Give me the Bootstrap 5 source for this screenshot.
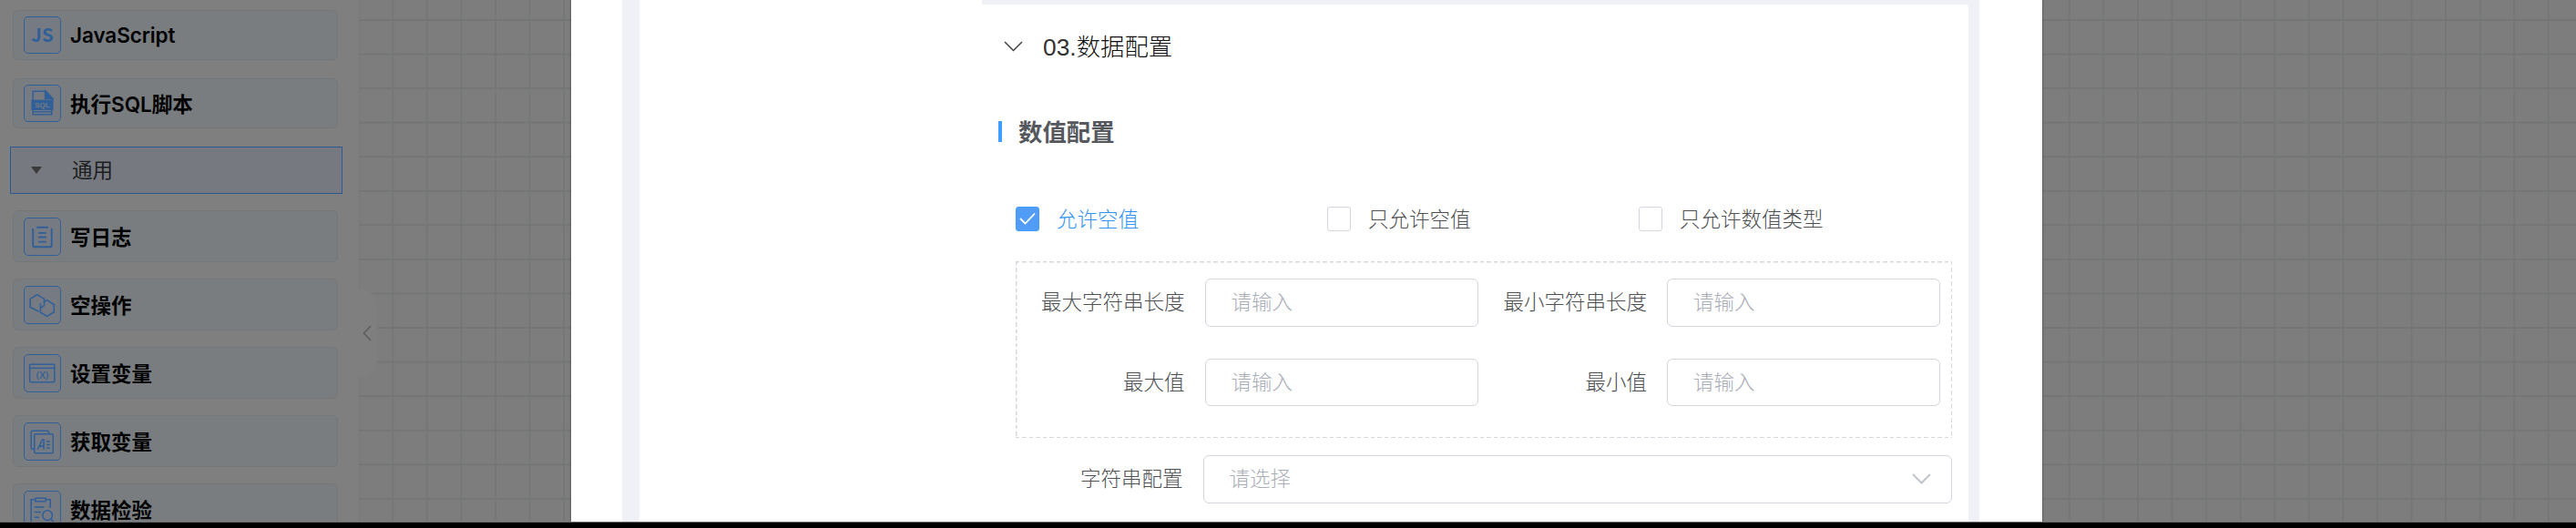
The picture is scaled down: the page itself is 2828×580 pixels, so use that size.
<!DOCTYPE html>
<html lang="zh-CN">
<head>
  <meta charset="UTF-8">
  <title>数据检验</title>
  <meta name="viewport" content="width=device-width, initial-scale=1.0">
  <link href="https://cdn.jsdelivr.net/npm/bootstrap@5.3.0/dist/css/bootstrap.min.css" rel="stylesheet">
  <style>
    body { font-family: "Liberation Sans", "Noto Sans CJK SC", sans-serif; font-size: 22.5px; line-height: 30px; background: #000; }
    .workspace { height: 574px; background: #7f7f7f; }
    .workspace::after { content: ""; position: absolute; left: 0; right: 0; bottom: 0; height: 1px; background: #6b6b6b; }

    /* 左侧组件栏 */
    .sidebar { width: 394px; padding: 11px 0 0 11px; }
    .node-item { width: 357px; height: 55px; margin: 0 0 20px 3px; padding-left: 11px; gap: 10px; background: #797d80; border: 1px solid #74777a; border-radius: 6px; color: #000; font-family: Inter, "Noto Sans CJK SC", sans-serif; font-weight: 600; }
    .node-tall { height: 57px; margin-bottom: 18px; }
    .node-item > span, .group-title > .group-name { padding-top: 2px; }
    .node-item > .latin-name { padding-top: 0; letter-spacing: -.1px; }
    .node-icon { width: 41px; height: 41px; flex: none; background: #767b83; border: 1px solid #315f98; border-radius: 5px; color: #315f98; }
    .node-tall .node-icon { height: 42px; }
    .node-icon svg { display: block; width: 100%; height: 100%; fill: none; stroke: currentColor; stroke-width: 1.5; }
    .node-icon text { fill: currentColor; stroke: none; font-weight: 700; font-family: "Noto Sans CJK SC", sans-serif; }
    .node-icon .sql-text { fill: #767b83; font-family: "Liberation Sans", sans-serif; }
    .node-icon .var-text { font-family: "Open Sans", sans-serif; font-weight: 600; }
    .group-title { width: 365px; height: 52px; margin: 0 0 18px; padding-left: 22px; gap: 33px; background: #76797f; border: 1px solid #2c5a94; color: #1c1d1f; }
    .caret { border: 6.5px solid transparent; border-top: 8px solid #3a3a3a; border-bottom: 0; }

    /* 画布网格 */
    .canvas { background-color: #7d7d7d; background-image: linear-gradient(#747676 1.5px, transparent 1.5px), linear-gradient(90deg, #757777 1.5px, transparent 1.5px); background-size: 37.57px 37.57px; background-position: 36.3px 21px; }
    .fold-btn { left: 0; top: 318px; width: 20px; height: 96px; background: #7f7f7f; border-radius: 0 18px 18px 0; }

    /* 弹窗 */
    .config-dialog { left: 627px; top: 0; width: 1615px; height: 573px; padding: 0 69px 0 55.5px; background: #fff; box-shadow: 0 0 2px rgba(0, 0, 0, .6); }
    .dialog-body { background: #f0f1f6; padding: 0 12px 0 19.5px; }
    .side-blank { width: 376px; background: #fff; }
    .config-panel { margin-top: 5px; padding: 0 18px 0 18px; background: #fff; border-radius: 0 4px 0 0; color: #4e5054; font-weight: 300; }
    .panel-title { height: 91px; padding-left: 6px; gap: 22px; font-size: 26.4px; color: #111; font-weight: 300; }
    .panel-title > span { padding-top: 2px; }
    .panel-title .no { color: #333; }
    .section-title { height: 97px; gap: 18px; font-size: 26.4px; color: #55585d; font-weight: 700; }
    .section-title::before { content: ""; width: 4px; height: 23px; background: #409eff; }
    .section-title > span { padding-top: 2px; }
    .section-body { padding-left: 19px; }
    .check-row { height: 94px; }
    .check-col { width: 342px; gap: 19px; }
    .check-col > span { padding-top: 3px; }
    .check-col .form-check-input { width: 26px; height: 27px; margin: 0; border: 1px solid #d3d6de; border-radius: 3px; }
    .check-col .form-check-input:checked { background-color: #519cf6; border-color: #409eff; background-size: 24px; background-image: url("data:image/svg+xml,%3csvg xmlns='http://www.w3.org/2000/svg' viewBox='0 0 24 24'%3e%3cpath fill='none' stroke='%23fff' stroke-width='1.8' d='M4 12l5.500 5.500L20 6.500'/%3e%3c/svg%3e"); }
    .check-col.active { color: #2f93fb; }
    /* 虚线框四边 */
    .dash-box {
      --dash: #d6d8e0 0 4.5px, transparent 4.5px 7.5px;
      height: 194px; padding: 19px 12px 0 1px; row-gap: 35px;
      background: repeating-linear-gradient(90deg, var(--dash)) top / 100% 1.5px no-repeat,
        repeating-linear-gradient(90deg, var(--dash)) bottom / 100% 1.5px no-repeat,
        repeating-linear-gradient(var(--dash)) left / 1.5px 100% no-repeat,
        repeating-linear-gradient(var(--dash)) right / 1.5px 100% no-repeat;
    }
    .field-label { text-align: right; padding: 2px 22px 0 0; }
    .form-control.cfg-input { width: 300px; height: 52.5px; padding: 2px 28px 0; border: 1px solid #d3d6de; border-radius: 6px; font-size: 22.5px; font-weight: 300; }
    .cfg-input::placeholder { color: #a9adb7; opacity: 1; }
    .select-row { margin-top: 18.5px; }
    .cfg-select { height: 53px; padding: 0 22px 0 28px; border: 1px solid #d3d6de; border-radius: 6px; color: #a9adb7; }
    .cfg-select > span { padding-top: 2px; }
    .w-a { width: 206.5px; }
    .w-b { width: 207.5px; }
    .select-row .w-a { width: 205.5px; }
  </style>
</head>
<body>
  <div class="workspace d-flex position-relative overflow-hidden">
    <aside class="sidebar flex-shrink-0">
      <div class="node-item d-flex align-items-center">
        <div class="node-icon"><svg viewBox="0 0 38 38"><text x="19" y="26.500" text-anchor="middle" font-size="20">JS</text></svg></div>
        <span class="latin-name">JavaScript</span>
      </div>
      <div class="node-item d-flex align-items-center">
        <div class="node-icon"><svg viewBox="0 0 38 38"><path d="M9 16V6h14l7 8v2M9 25v6h20v-6M10 28h18"/><path d="M22 6v8h8z" fill="currentColor"/><rect x="8" y="16" width="22" height="9.500" fill="currentColor"/><text class="sql-text" x="19" y="23.500" text-anchor="middle" font-size="7.500" textLength="16" lengthAdjust="spacingAndGlyphs">SQL</text></svg></div>
        <span>执行SQL脚本</span>
      </div>
      <div class="group-title d-flex align-items-center"><span class="caret"></span><span class="group-name">通用</span></div>
      <div class="node-item node-tall d-flex align-items-center">
        <div class="node-icon"><svg viewBox="0 0 38 38" stroke-linecap="round"><path d="M9 11v17q0 2 2 2h16q2 0 2-2V11M13.500 9h11M15.500 15h7M15.500 19.500h7M15.500 24.500h7" stroke-width="1.900"/></svg></div>
        <span>写日志</span>
      </div>
      <div class="node-item node-tall d-flex align-items-center">
        <div class="node-icon"><svg viewBox="0 0 38 38"><path d="M15.500 26L6 21.500V12.500L13.500 8l7.500 4.500v7l-3 2.500M17 17v10l7 4 7.500-4.500v-8L24 14l-4 2"/></svg></div>
        <span>空操作</span>
      </div>
      <div class="node-item node-tall d-flex align-items-center">
        <div class="node-icon"><svg viewBox="0 0 38 38"><rect x="5.500" y="9.500" width="26.500" height="19" rx="1"/><path d="M5.500 13.500h26.500"/><text class="var-text" x="19" y="24.500" text-anchor="middle" font-size="10.500">(X)</text></svg></div>
        <span>设置变量</span>
      </div>
      <div class="node-item node-tall d-flex align-items-center">
        <div class="node-icon"><svg viewBox="0 0 38 38"><path d="M10.500 27H9q-2 0-2-2V9q0-1.500 1.500-1.500H24q2 0 2 3"/><rect x="10.500" y="11" width="20" height="20.500" rx="1.500"/><path d="M14 27.500L19 17h1.500v10.500M16 24h4.500M23.500 19h3.500M23.500 22.500h3.500M23.500 26h3.500"/></svg></div>
        <span>获取变量</span>
      </div>
      <div class="node-item node-tall d-flex align-items-center">
        <div class="node-icon"><svg viewBox="0 0 38 38"><path d="M11 8H7v25h11M23 8h4.500v9M11.500 6.500h11v3.500h-11zM10.500 16h10.500M10.500 21.500h7M10.500 27h5"/><circle cx="24.500" cy="25" r="5.200"/><path d="M28 29l4 4"/></svg></div>
        <span>数据检验</span>
      </div>
    </aside>

    <main class="canvas flex-grow-1 position-relative">
      <div class="fold-btn position-absolute d-flex align-items-center">
        <svg class="ms-1" width="10" height="18" viewBox="0 0 10 18" fill="none" stroke="#5b5c5e" stroke-width="1.500"><path d="M9 1L1.500 9 9 17"/></svg>
      </div>
    </main>

    <div class="config-dialog position-absolute">
      <div class="dialog-body d-flex h-100">
        <div class="side-blank flex-shrink-0"></div>
        <div class="config-panel flex-grow-1">
          <div class="panel-title d-flex align-items-center">
            <svg width="21" height="12" viewBox="0 0 21 12" fill="none" stroke="#444" stroke-width="1.500"><path d="M1 1l9.500 9.500L20 1"/></svg>
            <span><span class="no">03.</span>数据配置</span>
          </div>
          <div class="section-title d-flex align-items-center"><span>数值配置</span></div>
          <div class="section-body">
            <div class="check-row d-flex align-items-center">
              <label class="check-col active d-flex align-items-center"><input class="form-check-input" type="checkbox" checked><span>允许空值</span></label>
              <label class="check-col d-flex align-items-center"><input class="form-check-input" type="checkbox"><span>只允许空值</span></label>
              <label class="check-col d-flex align-items-center"><input class="form-check-input" type="checkbox"><span>只允许数值类型</span></label>
            </div>
            <div class="dash-box d-flex flex-wrap align-content-start">
              <div class="d-flex align-items-center"><span class="field-label w-a">最大字符串长度</span><input class="form-control cfg-input" placeholder="请输入"></div>
              <div class="d-flex align-items-center"><span class="field-label w-b">最小字符串长度</span><input class="form-control cfg-input" placeholder="请输入"></div>
              <div class="d-flex align-items-center"><span class="field-label w-a">最大值</span><input class="form-control cfg-input" placeholder="请输入"></div>
              <div class="d-flex align-items-center"><span class="field-label w-b">最小值</span><input class="form-control cfg-input" placeholder="请输入"></div>
            </div>
            <div class="select-row d-flex align-items-center">
              <span class="field-label w-a">字符串配置</span>
              <div class="cfg-select flex-grow-1 d-flex align-items-center justify-content-between">
                <span>请选择</span>
                <svg width="21" height="12" viewBox="0 0 21 12" fill="none" stroke="#c0c4cc" stroke-width="2"><path d="M1 1l9.500 9.500L20 1"/></svg>
              </div>
            </div>
          </div>
        </div>
      </div>
    </div>
  </div>
  <script src="https://cdn.jsdelivr.net/npm/bootstrap@5.3.0/dist/js/bootstrap.bundle.min.js"></script>
</body>
</html>
